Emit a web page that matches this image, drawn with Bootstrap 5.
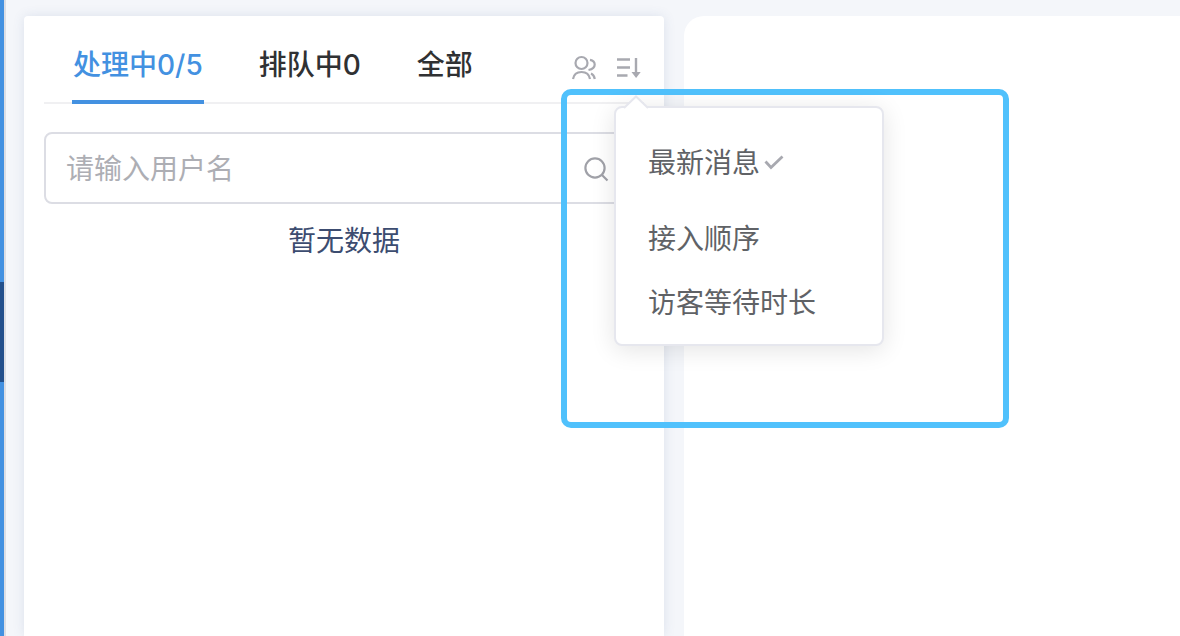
<!DOCTYPE html>
<html lang="zh-CN">
<head>
<meta charset="utf-8">
<meta name="viewport" content="width=device-width, initial-scale=1">
<title>客服工作台</title>
<link href="https://cdn.jsdelivr.net/npm/bootstrap@5.3.0/dist/css/bootstrap.min.css" rel="stylesheet">
<style>
body { background: #f4f6fa; font-family: Inter, "Noto Sans CJK SC", sans-serif; font-size: 28px; line-height: 40px; }
.rail { width: 6px; background: #4391e1; border-right: 2px solid #dcdee4; padding-top: 282px; }
.rail-active { height: 100px; background: #23508c; }
.sessions { width: 640px; margin: 16px 20px 0 18px; padding: 0 20px; border-radius: 4px 4px 0 0; box-shadow: 0 0 12px rgba(60, 90, 150, .13); }
.session-head { height: 88px; padding-left: 28px; box-shadow: inset 0 -2px #f0f0f2; }
.session-tabs { gap: 54px; }
.session-tab { padding: 29px 1px 15px; border: 0; border-bottom: 4px solid transparent; background: none; color: #303133; font-weight: 500; }
.session-tab.active { color: #4391e1; border-color: #4391e1; }
.tool-btn { display: block; padding: 0; border: 0; background: none; color: #a8a9b0; line-height: 0; }
.tools { gap: 16px; padding-top: 16px; }
.search-box { height: 72px; margin-top: 28px; border: 2px solid #dcdde4; border-radius: 8px; padding: 2px 32px 0 20px; color: #a0a1a8; }
.search-box input { font-size: 28px; line-height: 40px; color: #606266; padding: 0; }
.search-box input::placeholder { color: #adaeb4; opacity: 1; }
.empty-text { color: #3c4c70; margin-top: 17px; }
.chat { margin-top: 16px; border-radius: 20px 0 0 0; }
.sort-menu { top: 52px; left: 0; width: 270px; padding: 11px 0 9px; border: 2px solid #e6e7ee; border-radius: 8px; box-shadow: 0 4px 24px rgba(0, 0, 0, .11); font-size: 28px; z-index: 2; }
.sort-menu .dropdown-item { padding: 12px 32px; color: #606266; line-height: 40px; }
.sort-menu li:first-child .dropdown-item { padding-top: 24px; padding-bottom: 24px; }
.menu-arrow { top: -13px; left: 7px; }
.focus-frame { top: 89px; left: 561px; width: 448px; height: 339px; border: 6px solid #50c1fc; border-radius: 10px; pointer-events: none; z-index: 1; }
</style>
</head>
<body>
<div class="d-flex min-vh-100 position-relative overflow-hidden">
  <nav class="rail flex-shrink-0" aria-label="主导航"><div class="rail-active"></div></nav>

  <aside class="sessions bg-white flex-shrink-0">
    <div class="session-head d-flex justify-content-between">
      <div class="session-tabs d-flex" role="tablist">
        <button type="button" class="session-tab active" role="tab" aria-selected="true">处理中0/5</button>
        <button type="button" class="session-tab" role="tab" aria-selected="false">排队中0</button>
        <button type="button" class="session-tab" role="tab" aria-selected="false">全部</button>
      </div>
      <div class="tools d-flex align-items-center">
        <button type="button" class="tool-btn" aria-label="用户">
          <svg width="28" height="28" viewBox="0 0 28 28" fill="none" stroke="currentColor" stroke-width="2.200">
            <circle cx="11.500" cy="9" r="6"/><path d="M3 25c.8-4.800 4.300-7 8.500-7s7.700 2.200 8.500 7M20 5.800c3.200.6 4.700 2.300 4.700 4.700s-1.800 4.700-6.200 5.500M21 19.500c2.300 1 3.300 3 3.800 5.500"/>
          </svg>
        </button>
        <div class="position-relative">
          <button type="button" class="tool-btn" aria-label="排序" aria-expanded="true">
            <svg width="30" height="28" viewBox="0 0 30 28" fill="none" stroke="currentColor" stroke-width="2.400">
              <path d="M3 5.500h13M3 13.500h13M3 21.500h10.500M22 4v15"/><path d="M17.500 18h9.200l-4.600 6z" fill="currentColor" stroke="none"/>
            </svg>
          </button>
          <ul class="dropdown-menu show sort-menu">
            <li><a class="dropdown-item d-flex align-items-center" href="#">最新消息<svg class="ms-1" width="20" height="20" viewBox="0 0 20 20" fill="none" stroke="#a8a9b0" stroke-width="2.800"><path d="M1.500 8.500l5.500 6L18.500 3.500"/></svg></a></li>
            <li><a class="dropdown-item" href="#">接入顺序</a></li>
            <li><a class="dropdown-item" href="#">访客等待时长</a></li>
            <li class="menu-arrow position-absolute lh-1" aria-hidden="true"><svg class="d-block" width="26" height="14" viewBox="0 0 26 14"><path d="M0 14L13 1l13 13z" fill="#fff"/><path d="M1 13L13 1.500 25 13" fill="none" stroke="#e6e7ee" stroke-width="2"/></svg></li>
          </ul>
        </div>
      </div>
    </div>
    <div class="search-box d-flex align-items-center">
      <input type="text" class="form-control border-0 bg-transparent shadow-none" placeholder="请输入用户名" aria-label="请输入用户名">
      <svg class="flex-shrink-0" width="28" height="28" viewBox="0 0 28 28" fill="none" stroke="currentColor" stroke-width="2.200"><circle cx="13" cy="13" r="9.600"/><path d="M20 20l5.500 5.500"/></svg>
    </div>
    <p class="empty-text text-center mb-0">暂无数据</p>
  </aside>

  <main class="chat bg-white flex-grow-1"></main>
  <div class="focus-frame position-absolute"></div>
</div>
<script src="https://cdn.jsdelivr.net/npm/bootstrap@5.3.0/dist/js/bootstrap.bundle.min.js"></script>
</body>
</html>
